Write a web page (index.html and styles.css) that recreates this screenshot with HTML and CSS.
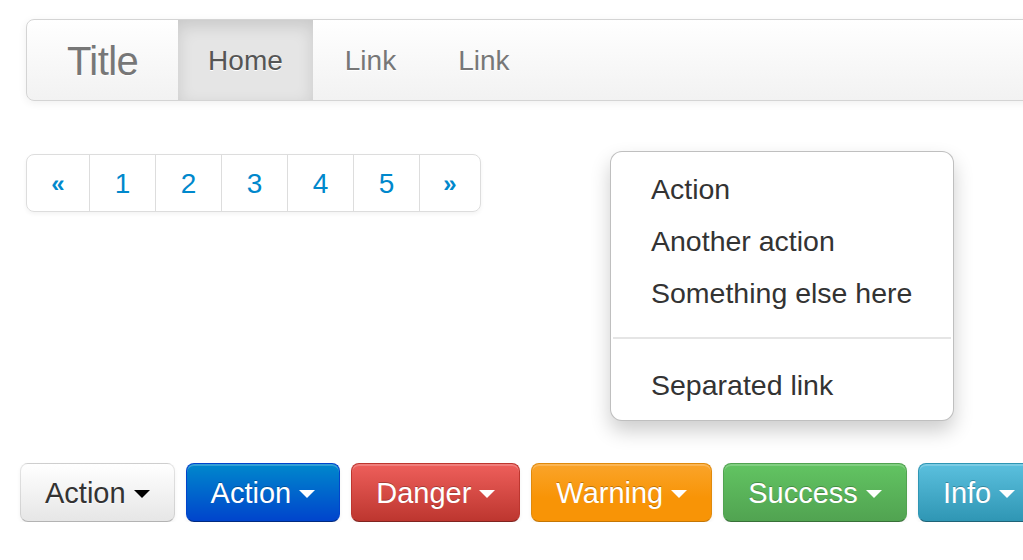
FILE: index.html
```html
<!DOCTYPE html>
<html>
<head>
<meta charset="utf-8">
<link rel="stylesheet" href="styles.css">
</head>
<body>
<div class="page">
  <div class="navbar">
    <a class="brand">Title</a>
    <ul class="nav">
      <li class="active"><a>Home</a></li>
      <li><a>Link</a></li>
      <li><a>Link</a></li>
    </ul>
  </div>

  <div class="middle">
    <ul class="pagination">
      <li class="p-first"><a>«</a></li>
      <li class="p-num"><a>1</a></li>
      <li class="p-num"><a>2</a></li>
      <li class="p-num"><a>3</a></li>
      <li class="p-num"><a>4</a></li>
      <li class="p-num"><a>5</a></li>
      <li class="p-last"><a>»</a></li>
    </ul>

    <ul class="dropdown-menu">
      <li><a>Action</a></li>
      <li><a>Another action</a></li>
      <li><a>Something else here</a></li>
      <li class="divider"></li>
      <li><a>Separated link</a></li>
    </ul>
  </div>

  <div class="buttons">
    <button class="btn">Action <span class="caret dark"></span></button>
    <button class="btn btn-primary">Action <span class="caret"></span></button>
    <button class="btn btn-danger">Danger <span class="caret"></span></button>
    <button class="btn btn-warning">Warning <span class="caret"></span></button>
    <button class="btn btn-success">Success <span class="caret"></span></button>
    <button class="btn btn-info">Info <span class="caret"></span></button>
  </div>
</div>
</body>
</html>
```

FILE: styles.css
```css
html, body {
  margin: 0;
  padding: 0;
  background: #fff;
  overflow: hidden;
}
body {
  font-family: "Liberation Sans", Arial, sans-serif;
  font-size: 28px;
  line-height: 40px;
  color: #333;
}
ul {
  list-style: none;
  margin: 0;
  padding: 0;
}
.page {
  width: 1200px;
  padding-top: 19px;
  display: flex;
  flex-direction: column;
}

/* Navbar */
.navbar {
  margin-left: 26px;
  width: 1100px;
  display: flex;
  align-items: stretch;
  padding-left: 40px;
  border: 1px solid #d4d4d4;
  border-radius: 8px;
  background: linear-gradient(to bottom, #ffffff, #f2f2f2);
  box-shadow: 0 2px 8px rgba(0,0,0,0.065);
  overflow: hidden;
}
.brand {
  margin-left: -40px;
  padding: 21px 40px 19px;
  font-size: 40px;
  line-height: 40px;
  color: #777;
  text-shadow: 0 1px 0 #fff;
  letter-spacing: -0.6px;
}
.nav {
  display: flex;
}
.nav li a {
  display: block;
  padding: 21px 30px 19px 32px;
  color: #777;
  text-shadow: 0 1px 0 #fff;
}
.nav li.active a {
  padding: 21px 30px 19px;
  background: #e5e5e5;
  color: #555;
  box-shadow: inset 0 6px 16px rgba(0,0,0,0.125);
}

/* Middle row */
.middle {
  display: flex;
  align-items: flex-start;
  margin-top: 50px;
}

.pagination {
  margin-left: 26px;
  margin-top: 3px;
  display: flex;
  border: 1px solid #ddd;
  border-radius: 8px;
  box-shadow: 0 2px 4px rgba(0,0,0,0.05);
  overflow: hidden;
}
.pagination li a {
  display: block;
  padding: 9px 0 7px;
  text-align: center;
  color: #0088cc;
  line-height: 40px;
}
.pagination li + li {
  border-left: 1px solid #ddd;
}
.p-first a { width: 62px; font-size: 24px; font-weight: bold; }
.p-num a { width: 65px; }
.p-last a { width: 60px; font-size: 24px; font-weight: bold; }

.dropdown-menu {
  margin-left: 129px;
  padding: 11px 0 9px;
  border: 1px solid rgba(0,0,0,0.25);
  border-radius: 12px;
  background: #fff;
  box-shadow: 0 10px 20px rgba(0,0,0,0.2);
}
.dropdown-menu li a {
  display: block;
  padding: 6px 41px 6px 40px;
  font-size: 28.5px;
  line-height: 40px;
  color: #333;
  white-space: nowrap;
}
.dropdown-menu .divider {
  height: 2px;
  margin: 18px 2px 20px;
  background: #e5e5e5;
}

/* Buttons */
.buttons {
  display: flex;
  flex-wrap: nowrap;
  gap: 11px;
  margin-left: 20px;
  margin-top: 42px;
}
.btn {
  font-family: "Liberation Sans", Arial, sans-serif;
  font-size: 29px;
  line-height: 40px;
  padding: 9px 24px 8px;
  border: 1px solid #cccccc;
  border-color: rgba(0,0,0,0.1) rgba(0,0,0,0.1) rgba(0,0,0,0.25);
  border-bottom-color: #b3b3b3;
  border-radius: 8px;
  color: #333;
  text-shadow: 0 1px 1px rgba(255,255,255,0.75);
  background: linear-gradient(to bottom, #ffffff, #e6e6e6);
  box-shadow: inset 0 2px 0 rgba(255,255,255,0.2), 0 2px 4px rgba(0,0,0,0.05);
  white-space: nowrap;
  flex: none;
  display: flex;
  align-items: center;
}
.btn-primary, .btn-danger, .btn-warning, .btn-success, .btn-info {
  color: #fff;
  text-shadow: 0 -1px 0 rgba(0,0,0,0.25);
}
.btn-primary { background: linear-gradient(to bottom, #0088cc, #0044cc); border-color: #0044cc #0044cc #002a80; }
.btn-danger { background: linear-gradient(to bottom, #ee5f5b, #bd362f); border-color: #bd362f #bd362f #802420; }
.btn-warning { background: linear-gradient(to bottom, #faa42a, #f89406 60%); border-color: #e08a0c #e08a0c #c47604; }
.btn-success { background: linear-gradient(to bottom, #62c462, #51a351); border-color: #51a351 #51a351 #387038; }
.btn-info { background: linear-gradient(to bottom, #5bc0de, #2f96b4); border-color: #2f96b4 #2f96b4 #1f6377; }

.caret {
  display: inline-block;
  width: 0;
  height: 0;
  margin-left: 8px;
  margin-top: 2px;
  border-top: 8px solid #fff;
  border-left: 8px solid transparent;
  border-right: 8px solid transparent;
}
.caret.dark {
  border-top-color: #000;
}
```
